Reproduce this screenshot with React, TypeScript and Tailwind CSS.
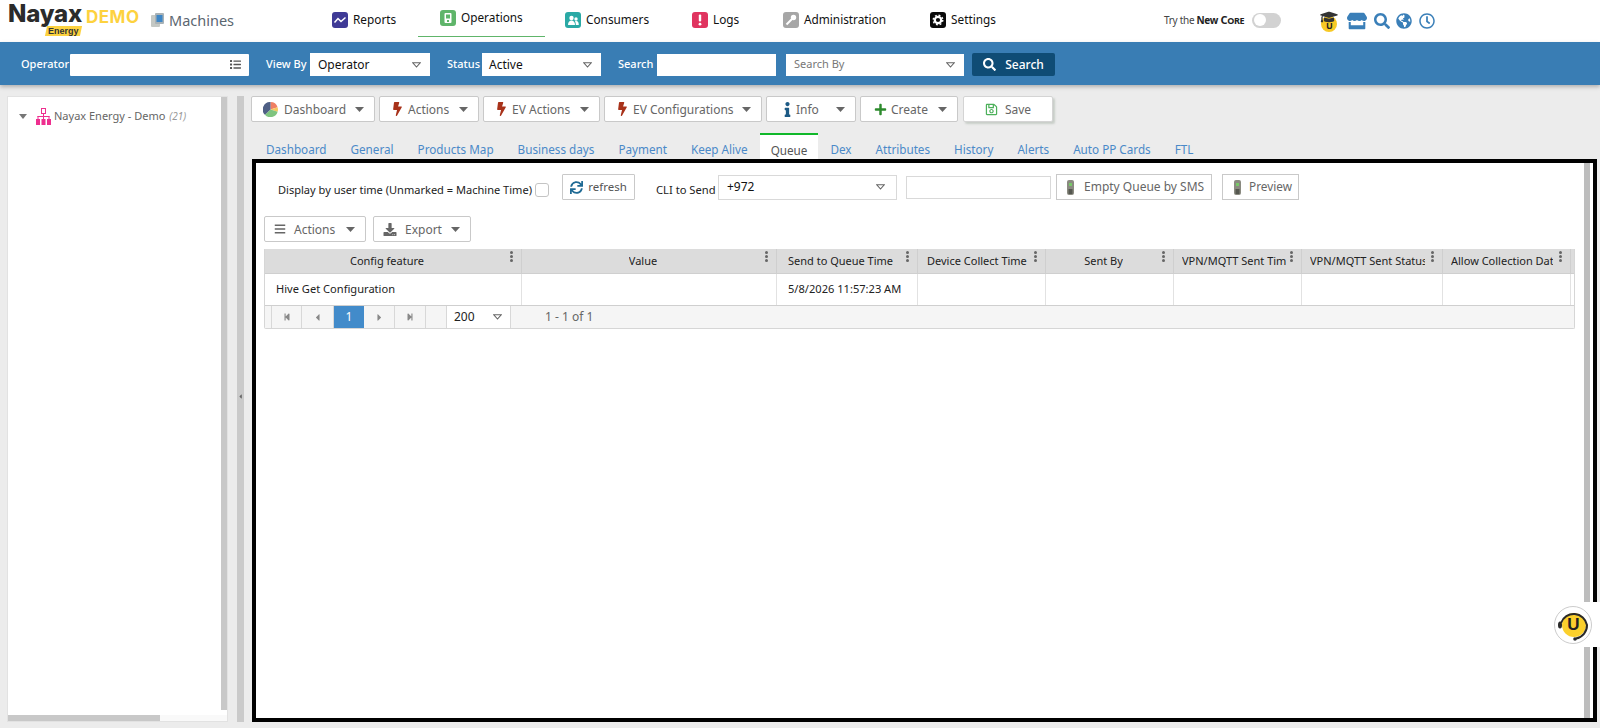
import React from "react";
import {
  FaBars,
  FaBolt,
  FaDownload,
  FaGlobeAmericas,
  FaGraduationCap,
  FaInfo,
  FaList,
  FaPlus,
  FaRegClock,
  FaRegSave,
  FaSearch,
  FaStepBackward,
  FaStepForward,
  FaStore,
  FaSync,
  FaCaretLeft,
  FaCaretRight,
} from "react-icons/fa";

const SelectArrow = () => (
  <svg width="9" height="6" viewBox="0 0 9 6" className="shrink-0">
    <path d="M.8.8h7.400L4.500 5z" fill="none" stroke="#666" strokeWidth="1.100" />
  </svg>
);

const Caret = () => (
  <svg width="9" height="5" viewBox="0 0 9 5" className="shrink-0">
    <path d="M0 0h9L4.500 5z" fill="#666" />
  </svg>
);

const Phone = () => (
  <svg width="7" height="15" viewBox="0 0 7 15" className="shrink-0">
    <rect x="0" y="0" width="7" height="15" rx="2" fill="#8a8a80" />
    <rect x="2" y="3" width="3" height="3" fill="#78c868" />
    <rect x="1.500" y="9" width="4" height="5" fill="#55574f" />
  </svg>
);

const Pie = () => (
  <svg width="15" height="15" viewBox="0 0 20 20" className="shrink-0">
    <path d="M10 10V0a10 10 0 0 1 9.500 7z" fill="#ef7f63" />
    <path d="M10 10l9.500-3a10 10 0 0 1 0 6z" fill="#f6c85f" />
    <path d="M10 10l9.500 3a10 10 0 0 1-17 4z" fill="#7fc47f" />
    <path d="M10 10l-7.500 7A10 10 0 0 1 10 0z" fill="#4f5f85" />
  </svg>
);

const NavBadge = ({ kind }: { kind: string }) => {
  if (kind === "reports")
    return (
      <svg width="16" height="16" viewBox="0 0 16 16" className="shrink-0">
        <rect width="16" height="16" rx="3" fill="#3f3a96" />
        <path d="M2.500 10.500 6 6.500l3 3 4.500-4" fill="none" stroke="#fff" strokeWidth="1.500" />
      </svg>
    );
  if (kind === "operations")
    return (
      <svg width="16" height="16" viewBox="0 0 16 16" className="shrink-0">
        <rect width="16" height="16" rx="3" fill="#5fb56a" />
        <rect x="4.500" y="3" width="7" height="10" rx="1" fill="#fff" />
        <rect x="6" y="4.500" width="4" height="4" fill="#5fb56a" />
        <rect x="7" y="10" width="2" height="2" fill="#5fb56a" />
      </svg>
    );
  if (kind === "consumers")
    return (
      <svg width="16" height="16" viewBox="0 0 16 16" className="shrink-0">
        <rect width="16" height="16" rx="3" fill="#2aa9a5" />
        <circle cx="6.500" cy="6" r="2.200" fill="#fff" />
        <path d="M3 13c0-3 1.500-4.500 3.500-4.500S10 10 10 13z" fill="#fff" />
        <circle cx="11" cy="7" r="1.700" fill="#fff" />
        <path d="M10.800 13c0-1.800-.3-3-1-3.700.5-.3 1-.3 1.500-.3 1.700 0 2.500 1.500 2.500 4z" fill="#fff" />
      </svg>
    );
  if (kind === "logs")
    return (
      <svg width="16" height="16" viewBox="0 0 16 16" className="shrink-0">
        <rect width="16" height="16" rx="3" fill="#e0345f" />
        <rect x="6.800" y="2.500" width="2.400" height="7" rx="1" fill="#fff" />
        <circle cx="8" cy="12.200" r="1.400" fill="#fff" />
      </svg>
    );
  if (kind === "administration")
    return (
      <svg width="16" height="16" viewBox="0 0 16 16" className="shrink-0">
        <rect width="16" height="16" rx="3" fill="#a6a6a6" />
        <circle cx="10.500" cy="5.500" r="2.700" fill="#fff" />
        <path d="M9 7 3.500 12.500" stroke="#fff" strokeWidth="2" />
      </svg>
    );
  return (
    <svg width="16" height="16" viewBox="0 0 16 16" className="shrink-0">
      <rect width="16" height="16" rx="3" fill="#0a0a0a" />
      <circle cx="8" cy="8" r="3.200" fill="none" stroke="#fff" strokeWidth="2.200" />
      <circle cx="8" cy="8" r="4.800" fill="none" stroke="#fff" strokeWidth="1.400" strokeDasharray="1.900 1.870" />
    </svg>
  );
};

const ToolButton = ({
  icon,
  label,
  width,
  gap = "gap-[5px]",
  pad = "pl-[12px]",
}: {
  icon: React.ReactNode;
  label: string;
  width: string;
  gap?: string;
  pad?: string;
}) => (
  <div className={`${width} ${pad} h-[26px] flex items-center justify-between pr-[10px] bg-white border border-[#c9c9c9] rounded-[2px] text-[#666] text-[12px] whitespace-nowrap`}>
    <span className={`flex items-center ${gap}`}>
      {icon}
      <span className="pt-[1px]">{label}</span>
    </span>
    <Caret />
  </div>
);

const tabs = [
  "Dashboard",
  "General",
  "Products Map",
  "Business days",
  "Payment",
  "Keep Alive",
  "Queue",
  "Dex",
  "Attributes",
  "History",
  "Alerts",
  "Auto PP Cards",
  "FTL",
];

const columns = [
  { title: "Config feature", width: "w-[257px]", text: "justify-center pr-[12px]", clip: "max-w-none" },
  { title: "Value", width: "w-[255px]", text: "justify-center pr-[12px]", clip: "max-w-none" },
  { title: "Send to Queue Time", width: "w-[141px]", text: "pl-[11px]", clip: "max-w-[108px]" },
  { title: "Device Collect Time", width: "w-[128px]", text: "pl-[9px]", clip: "max-w-[103px]" },
  { title: "Sent By", width: "w-[128px]", text: "justify-center pr-[12px]", clip: "max-w-none" },
  { title: "VPN/MQTT Sent Time", width: "w-[128px]", text: "pl-[8px]", clip: "max-w-[104px]" },
  { title: "VPN/MQTT Sent Status", width: "w-[141px]", text: "pl-[8px]", clip: "max-w-[115px]" },
  { title: "Allow Collection Date", width: "w-[128px]", text: "pl-[8px]", clip: "max-w-[102px]" },
];

const rowValues = ["Hive Get Configuration", "", "5/8/2026 11:57:23 AM", "", "", "", "", ""];

const navItems = [
  { kind: "reports", label: "Reports", box: "w-[86px] h-[39px]" },
  { kind: "operations", label: "Operations", box: "w-[127px] h-[37px] pl-[22px] border-b border-[#5fb56a]" },
  { kind: "consumers", label: "Consumers", box: "w-[147px] h-[39px] pl-[20px]" },
  { kind: "logs", label: "Logs", box: "w-[91px] h-[39px]" },
  { kind: "administration", label: "Administration", box: "w-[147px] h-[39px]" },
  { kind: "settings", label: "Settings", box: "w-[100px] h-[39px]" },
];

const PagerCell = ({ children, width }: { children: React.ReactNode; width: string }) => (
  <div className={`${width} h-full flex items-center justify-center border-r border-[#d8d8d8] text-[#888]`}>
    {children}
  </div>
);

const App = () => {
  return (
    <div className="relative w-[1600px] h-[728px] overflow-hidden bg-[#ececec] font-['Noto_Sans',sans-serif] text-[11px] text-[#222] flex flex-col">
      {/* Top navigation */}
      <header className="h-[42px] shrink-0 bg-white flex items-start">
        <div className="w-[150px] shrink-0 pl-[8px] pt-[2px] flex items-start">
          <div className="flex flex-col items-end w-[74px]">
            <span className="font-['Inter',sans-serif] font-extrabold text-[24px] leading-[24px] tracking-[-0.200px] text-[#2b2b2b]">Nayax</span>
            <span className="mr-[1px] h-[10px] w-[35px] bg-[#fdd23f] -skew-x-12 flex items-center justify-center">
              <span className="skew-x-12 font-['Liberation_Sans',sans-serif] font-bold text-[9px] leading-none text-[#333]">Energy</span>
            </span>
          </div>
          <span className="ml-[4px] mt-[5px] font-['Inter',sans-serif] font-bold text-[17px] leading-[20px] tracking-[0.500px] text-[#fdd23f]">DEMO</span>
        </div>
        <div className="w-[182px] shrink-0 h-[42px] flex items-center gap-[5px] pb-[1px] pl-[1px] text-[#5b6670] text-[14.500px]">
          <svg width="13" height="15" viewBox="0 0 13 15" className="shrink-0">
            <rect x="0" y="2" width="9" height="12" rx="1" fill="#c4c8c4" />
            <rect x="4" y="0" width="9" height="11" rx="1" fill="#a9b2b6" />
            <rect x="5.500" y="2" width="6" height="7" fill="#3d86c6" />
          </svg>
          <span>Machines</span>
        </div>
        <nav className="flex items-start h-[42px]">
          {navItems.map((item) => (
            <div key={item.kind} className={`${item.box} flex items-center gap-[5px] text-[11.800px] text-[#111]`}>
              <NavBadge kind={item.kind} />
              <span>{item.label}</span>
            </div>
          ))}
        </nav>
        <div className="ml-[134px] h-[40px] flex items-center gap-[8px]">
          <span className="text-[10px] tracking-[-0.300px] text-[#444] whitespace-nowrap">
            Try the <b className="text-[#222]">New</b> <b className="text-[#222] text-[11px]">C</b><b className="text-[#222] text-[9px]">ORE</b>
          </span>
          <div className="w-[29px] h-[15px] rounded-full bg-[#d2d2d2] p-[2px] flex items-center">
            <div className="w-[12px] h-[12px] rounded-full bg-white" />
          </div>
        </div>
        <div className="ml-[37px] h-[42px] flex items-center gap-[7px] text-[#3a7fb8]">
          <div className="relative w-[22px] h-[22px]">
            <div className="absolute left-[3px] top-[6px] w-[16px] h-[16px] rounded-full bg-[#f7c925] flex items-center justify-center pt-[3px] text-[9px] font-bold leading-none text-[#222]">U</div>
            <FaGraduationCap className="absolute left-0 top-0 w-[22px] h-[14px] text-[#333]" />
          </div>
          <FaStore className="w-[20px] h-[18px]" />
          <FaSearch className="w-[16px] h-[16px]" />
          <FaGlobeAmericas className="w-[16px] h-[16px] ml-[-1px]" />
          <FaRegClock className="w-[16px] h-[16px]" />
        </div>
      </header>

      {/* Filter bar */}
      <div className="h-[43px] shrink-0 bg-[#397db4] shadow-[0_2px_4px_rgba(0,0,0,0.25)] flex items-center pl-[21px] pt-[2px] text-white text-[11px] font-medium whitespace-nowrap z-10">
        <span className="w-[49px]">Operator</span>
        <div className="w-[179px] h-[22px] bg-white rounded-[1px] flex items-center justify-end pr-[7px]">
          <FaList className="w-[13px] h-[11px] text-[#555]" />
        </div>
        <span className="ml-[17px] w-[44px]">View By</span>
        <div className="w-[120px] h-[23px] bg-white flex items-center justify-between pl-[8px] pr-[9px] text-[#111] text-[12px] font-normal">
          Operator
          <SelectArrow />
        </div>
        <span className="ml-[17px] w-[35px]">Status</span>
        <div className="w-[119px] h-[23px] bg-white flex items-center justify-between pl-[7px] pr-[9px] text-[#111] text-[12px] font-normal">
          Active
          <SelectArrow />
        </div>
        <span className="ml-[17px] w-[39px]">Search</span>
        <div className="w-[119px] h-[22px] bg-white" />
        <div className="ml-[10px] w-[178px] h-[22px] bg-white flex items-center justify-between pl-[8px] pr-[9px] text-[#777] text-[11px] font-normal">
          Search By
          <SelectArrow />
        </div>
        <div className="ml-[8px] w-[83px] h-[23px] bg-[#0f4c75] rounded-[2px] flex items-center justify-center gap-[9px] text-[12px]">
          <FaSearch className="w-[13px] h-[13px]" />
          Search
        </div>
      </div>

      {/* Body */}
      <div className="flex-1 min-h-0 flex pt-[11px] pb-[6px] pl-[7px] pr-[4px]">
        {/* Tree panel */}
        <aside className="w-[221px] shrink-0 bg-white border border-[#e2e2e2] flex flex-col">
          <div className="flex-1 flex min-h-0">
            <div className="flex-1 pl-[11px] pt-[11px]">
              <div className="flex items-center text-[#666] text-[11px] whitespace-nowrap">
                <svg width="8" height="5" viewBox="0 0 8 5" className="shrink-0">
                  <path d="M0 0h8L4 5z" fill="#777" />
                </svg>
                <svg width="15" height="17" viewBox="0 0 15 17" className="ml-[9px] mr-[3px] shrink-0" fill="#ee2f8f">
                  <path d="M5 0h5v6H5zM6 1v4h3V1z" fillRule="evenodd" />
                  <rect x="7" y="6" width="1" height="2.500" />
                  <rect x="1.500" y="8" width="12" height="1" />
                  <rect x="1.500" y="8" width="1" height="3" />
                  <rect x="12.500" y="8" width="1" height="3" />
                  <rect x="7" y="8" width="1" height="3" />
                  <rect x="0" y="11" width="4" height="6" />
                  <rect x="5.500" y="11" width="4" height="6" />
                  <rect x="11" y="11" width="4" height="6" />
                </svg>
                <span>Nayax Energy - Demo</span>
                <i className="ml-[4px] text-[#999] text-[10px]">(21)</i>
              </div>
            </div>
            <div className="w-[6px] shrink-0 bg-[#c8c8c8] mb-[5px]" />
          </div>
          <div className="h-[6px] shrink-0 bg-[#f9f9f9]">
            <div className="w-[152px] h-full bg-[#c8c8c8]" />
          </div>
        </aside>

        {/* Splitter */}
        <div className="ml-[9px] w-[7px] shrink-0 bg-[#cacaca] flex items-center justify-center pb-[26px]">
          <FaCaretLeft className="w-[7px] h-[7px] text-[#666]" />
        </div>

        {/* Main column */}
        <main className="ml-[7px] flex-1 min-w-0 flex flex-col">
          <div className="flex gap-[4px] h-[26px] shrink-0">
            <ToolButton width="w-[124px]" label="Dashboard" gap="gap-[6px]" pad="pl-[11px]" icon={<Pie />} />
            <ToolButton width="w-[100px]" label="Actions" icon={<FaBolt className="w-[11px] h-[14px] text-[#a8321a]" />} />
            <ToolButton width="w-[117px]" label="EV Actions" icon={<FaBolt className="w-[11px] h-[14px] text-[#a8321a]" />} />
            <ToolButton width="w-[158px]" label="EV Configurations" icon={<FaBolt className="w-[11px] h-[14px] text-[#a8321a]" />} />
            <ToolButton width="w-[90px]" label="Info" gap="gap-[3px]" pad="pl-[15px]" icon={<FaInfo className="w-[11px] h-[15px] text-[#1d5a85]" />} />
            <ToolButton width="w-[98px]" label="Create" gap="gap-[4px]" pad="pl-[13px]" icon={<FaPlus className="w-[13px] h-[13px] text-[#2c8a2c]" />} />
            <div className="ml-[1px] w-[90px] h-[26px] flex items-center justify-center gap-[7px] bg-white border border-[#d4d4d4] rounded-[2px] shadow-[2px_2px_2px_rgba(120,140,120,0.3)] text-[#666] text-[12px]">
              <FaRegSave className="w-[13px] h-[13px] text-[#4cb05a]" />
              <span className="pt-[1px]">Save</span>
            </div>
          </div>

          {/* Tabs */}
          <div className="mt-[11px] h-[26px] shrink-0 flex items-end pl-[3px]">
            {tabs.map((tab) =>
              tab === "Queue" ? (
                <div key={tab} className="h-[26px] px-[11px] pt-[7px] flex items-center justify-center bg-white border-t-2 border-[#10b82a] text-[#555] text-[11.700px]">
                  {tab}
                </div>
              ) : (
                <div key={tab} className="h-[26px] px-[12px] pt-[7px] flex items-center text-[#4a89c8] text-[11.700px]">
                  {tab}
                </div>
              )
            )}
          </div>

          {/* Queue frame */}
          <section className="flex-1 min-h-0 w-[1345px] ml-[1px] bg-white border-4 border-black flex">
            <div className="flex-1 min-w-0 pl-[8px]">
              <div className="h-[26px] mt-[11px] flex items-center whitespace-nowrap">
                <span className="ml-[14px] w-[257px] mt-[6px] text-[11.050px] text-[#222]">Display by user time (Unmarked = Machine Time)</span>
                <div className="mt-[6px] w-[14px] h-[14px] bg-white border border-[#c4c4c4] rounded-[3px]" />
                <div className="ml-[13px] w-[73px] h-[26px] bg-white border border-[#c9c9c9] rounded-[1px] flex items-center justify-center gap-[5px] text-[#555] text-[11.500px]">
                  <FaSync className="w-[13px] h-[13px] text-[#1f6a94]" />
                  refresh
                </div>
                <span className="ml-[21px] w-[62px] mt-[6px] text-[11.200px] text-[#222]">CLI to Send</span>
                <div className="w-[179px] h-[25px] bg-white border border-[#d9d9d9] flex items-center justify-between pl-[8px] pr-[11px] text-[#111] text-[12px]">
                  +972
                  <SelectArrow />
                </div>
                <div className="ml-[9px] w-[145px] h-[23px] border border-[#d9d9d9]" />
                <div className="ml-[5px] w-[156px] h-[26px] border border-[#c9c9c9] flex items-center pl-[10px] gap-[10px] text-[#666] text-[12px]">
                  <Phone />
                  Empty Queue by SMS
                </div>
                <div className="ml-[10px] w-[77px] h-[26px] border border-[#c9c9c9] flex items-center pl-[11px] gap-[8px] text-[#666] text-[11.800px]">
                  <Phone />
                  Preview
                </div>
              </div>

              <div className="mt-[16px] h-[26px] flex gap-[7px]">
                <ToolButton width="w-[102px]" label="Actions" gap="gap-[8px]" pad="pl-[9px]" icon={<FaBars className="w-[12px] h-[12px] text-[#666]" />} />
                <ToolButton width="w-[98px]" label="Export" gap="gap-[8px]" pad="pl-[9px]" icon={<FaDownload className="w-[14px] h-[13px] text-[#666]" />} />
              </div>

              {/* Grid */}
              <div className="mt-[7px] w-[1311px] border-b border-x border-[#d6d6d6] rounded-b-[2px]">
                <div className="flex h-[25px] bg-[#dcdcdc] border-b border-[#cfcfcf]">
                  {columns.map((col) => (
                    <div key={col.title} className={`${col.width} ${col.text} relative shrink-0 h-full flex items-center border-r border-[#cfcfcf] text-[#222] text-[11px]`}>
                      <span className={`${col.clip} whitespace-nowrap block overflow-hidden`}>{col.title}</span>
                      <span className="absolute right-[8px] top-[2px] w-[3px] flex flex-col gap-[1px]">
                        <i className="w-[3px] h-[3px] rounded-full bg-[#666]" />
                        <i className="w-[3px] h-[3px] rounded-full bg-[#666]" />
                        <i className="w-[3px] h-[3px] rounded-full bg-[#666]" />
                      </span>
                    </div>
                  ))}
                </div>
                <div className="flex h-[32px] bg-white border-b border-[#cfcfcf]">
                  {columns.map((col, i) => (
                    <div key={col.title} className={`${col.width} shrink-0 h-full flex items-center border-r border-[#e2e2e2] pl-[11px] text-[#222] text-[11.100px] whitespace-nowrap`}>
                      {rowValues[i]}
                    </div>
                  ))}
                </div>
                <div className="flex h-[22px] items-center bg-[#f5f5f5] pl-[6px] text-[12px] text-[#666]">
                  <div className="flex h-full items-center border-l border-[#d8d8d8]">
                    <PagerCell width="w-[30px]"><FaStepBackward className="w-[8px] h-[8px]" /></PagerCell>
                    <PagerCell width="w-[32px]"><FaCaretLeft className="w-[11px] h-[11px]" /></PagerCell>
                    <div className="w-[30px] h-full flex items-center justify-center bg-[#428bca] text-white">1</div>
                    <PagerCell width="w-[31px]"><FaCaretRight className="w-[11px] h-[11px]" /></PagerCell>
                    <PagerCell width="w-[31px]"><FaStepForward className="w-[8px] h-[8px]" /></PagerCell>
                    <PagerCell width="w-[21px]"><span /></PagerCell>
                  </div>
                  <div className="w-[64px] h-full flex items-center justify-between pl-[7px] pr-[8px] bg-white border-r border-[#d8d8d8] text-[#222]">
                    200
                    <SelectArrow />
                  </div>
                  <span className="ml-[34px]">1 - 1 of 1</span>
                </div>
              </div>
            </div>
            <div className="w-[6px] shrink-0 mr-[3px] bg-[#bdbdbd]" />
          </section>
        </main>
      </div>

      {/* Floating support badge */}
      <div className="absolute right-0 top-[602px] w-[48px] h-[45px] bg-white rounded-l-full flex items-center pl-[2px]">
        <div className="relative w-[38px] h-[38px] rounded-full border border-[#ccc] flex items-center justify-center">
          <svg width="36" height="36" viewBox="0 0 36 36" className="absolute left-0 top-0">
            <circle cx="19" cy="18" r="12" fill="#fbd02d" />
            <path d="M6 16A13.500 13.500 0 0 1 32 18 13.500 13.500 0 0 1 21 31.500" fill="none" stroke="#2a2a2a" strokeWidth="2" />
            <ellipse cx="5" cy="18" rx="2" ry="3.500" fill="#2a2a2a" />
            <circle cx="20" cy="32" r="1.800" fill="#2a2a2a" />
          </svg>
          <span className="relative ml-[1px] font-['Liberation_Sans',sans-serif] font-bold text-[17px] leading-none text-[#222]">U</span>
        </div>
      </div>
    </div>
  );
};

export default App;
